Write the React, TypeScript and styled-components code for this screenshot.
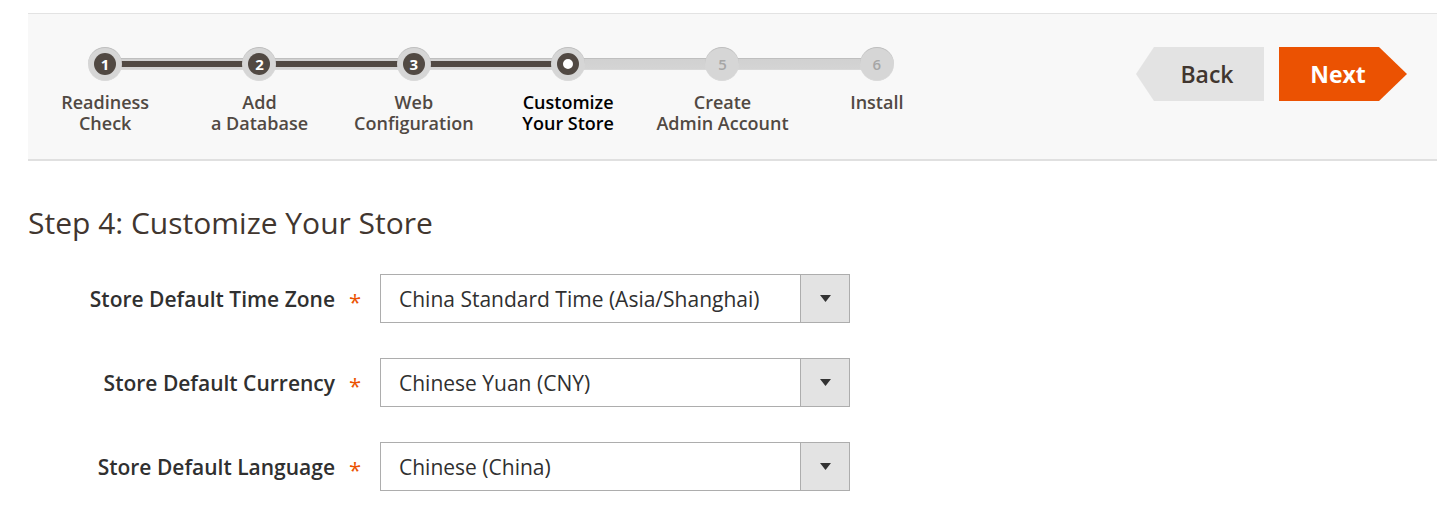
import React from "react";
import styled, { createGlobalStyle, css } from "styled-components";

const Global = createGlobalStyle`
  html, body { margin: 0; padding: 0; background: #ffffff; }
  body { font-family: "Open Sans", "Liberation Sans", sans-serif; color: #303030; }
  * { box-sizing: border-box; }
`;

const Page = styled.div`
  padding: 13px 6px 0 28px;
  width: 1443px;
`;

const Header = styled.div`
  display: flex;
  justify-content: space-between;
  align-items: flex-start;
  background: #f8f8f8;
  border-top: 1px solid #e3e3e3;
  border-bottom: 2px solid #e0e0e0;
  height: 148px;
`;

const Steps = styled.ol`
  position: relative;
  display: flex;
  margin: 0;
  padding: 33px 0 0 0;
  list-style: none;
`;

const Track = styled.div`
  position: absolute;
  top: 44px;
  left: 77px;
  right: 77px;
  height: 12px;
  background: linear-gradient(to bottom, #d1d1d1, #d4d4d4);
  border-top: 1px solid #bfbfbf;
  border-bottom: 1px solid #d9d9d9;
`;

const Progress = styled.div<{ $w: number }>`
  position: absolute;
  top: 47px;
  left: 77px;
  height: 6px;
  width: ${(p) => p.$w}px;
  background: #514943;
`;

const Step = styled.li`
  position: relative;
  width: 154.33px;
  display: flex;
  flex-direction: column;
  align-items: center;
`;

const Ring = styled.div`
  width: 34px;
  height: 34px;
  border-radius: 50%;
  background: #d6d6d6;
  border-top: 1px solid #bebebe;
  border-bottom: 1px solid #d9d9d9;
  display: flex;
  align-items: center;
  justify-content: center;
`;

const Dot = styled.div<{ $state: "done" | "active" | "todo" }>`
  width: 22px;
  height: 22px;
  border-radius: 50%;
  display: flex;
  align-items: center;
  justify-content: center;
  font-size: 15px;
  font-weight: 700;
  line-height: 1;
  ${(p) =>
    p.$state === "done" &&
    css`
      background: #514943;
      color: #ffffff;
    `}
  ${(p) =>
    p.$state === "active" &&
    css`
      background: #ffffff;
      border: 6px solid #514943;
    `}
  ${(p) =>
    p.$state === "todo" &&
    css`
      background: transparent;
      color: #a6a6a6;
      font-weight: 600;
    `}
`;

const StepLabel = styled.div<{ $active: boolean }>`
  margin-top: 11px;
  font-size: 18px;
  font-weight: 600;
  line-height: 21px;
  text-align: center;
  white-space: pre;
  color: ${(p) => (p.$active ? "#000000" : "#514943")};
`;

const Actions = styled.div`
  display: flex;
  gap: 15px;
  margin: 33px 30px 0 0;
`;

const NavButton = styled.button<{ $kind: "prev" | "next" }>`
  height: 54px;
  border: 0;
  font-family: "Open Sans", "Liberation Sans", sans-serif;
  font-size: 23px;
  cursor: pointer;
  display: flex;
  align-items: center;
  justify-content: center;
  ${(p) =>
    p.$kind === "prev"
      ? css`
          width: 128px;
          padding: 0 0 0 14px;
          background: #e3e3e3;
          color: #41362f;
          font-weight: 600;
          clip-path: polygon(18px 0, 100% 0, 100% 100%, 18px 100%, 0 50%);
        `
      : css`
          width: 128px;
          padding: 0 10px 0 0;
          background: #eb5202;
          color: #ffffff;
          font-weight: 700;
          clip-path: polygon(0 0, 100px 0, 100% 50%, 100px 100%, 0 100%);
        `}
`;

const Title = styled.h1`
  margin: 42px 0 0 0;
  font-size: 30px;
  font-weight: 400;
  line-height: 40px;
  color: #41362f;
`;

const Form = styled.div`
  display: flex;
  flex-direction: column;
  gap: 35px;
  margin-top: 31px;
`;

const Row = styled.div`
  display: grid;
  grid-template-columns: 307px 45px 470px;
  align-items: center;
`;

const Label = styled.label`
  text-align: right;
  font-size: 21px;
  font-weight: 600;
  color: #303030;
  white-space: nowrap;
`;

const Req = styled.span`
  padding-left: 14px;
  color: #eb5202;
  font-size: 22px;
  line-height: 1;
  padding-top: 4px;
`;

const Select = styled.div`
  display: flex;
  height: 49px;
  border: 1px solid #adadad;
  background: #ffffff;
`;

const SelectValue = styled.div`
  flex: 1;
  display: flex;
  align-items: center;
  padding-left: 18px;
  font-size: 21px;
  color: #303030;
  white-space: nowrap;
`;

const SelectArrow = styled.div`
  width: 49px;
  background: #e3e3e3;
  border-left: 1px solid #adadad;
  display: flex;
  align-items: center;
  justify-content: center;
`;

const steps = [
  "Readiness\nCheck",
  "Add\na Database",
  "Web\nConfiguration",
  "Customize\nYour Store",
  "Create\nAdmin Account",
  "Install",
];
const ACTIVE = 3;

const fields = [
  ["Store Default Time Zone", "China Standard Time (Asia/Shanghai)"],
  ["Store Default Currency", "Chinese Yuan (CNY)"],
  ["Store Default Language", "Chinese (China)"],
];

export default function App() {
  return (
    <>
      <Global />
      <Page>
        <Header>
          <Steps>
            <Track />
            <Progress $w={154.33 * ACTIVE} />
            {steps.map((s, i) => {
              const state = i < ACTIVE ? "done" : i === ACTIVE ? "active" : "todo";
              return (
                <Step key={i}>
                  <Ring>
                    <Dot $state={state}>{state === "active" ? "" : i + 1}</Dot>
                  </Ring>
                  <StepLabel $active={i === ACTIVE}>{s}</StepLabel>
                </Step>
              );
            })}
          </Steps>
          <Actions>
            <NavButton $kind="prev">Back</NavButton>
            <NavButton $kind="next">Next</NavButton>
          </Actions>
        </Header>
        <Title>Step 4: Customize Your Store</Title>
        <Form>
          {fields.map(([l, v]) => (
            <Row key={l}>
              <Label>{l}</Label>
              <Req>*</Req>
              <Select>
                <SelectValue>{v}</SelectValue>
                <SelectArrow>
                  <svg width="11" height="7" viewBox="0 0 11 7">
                    <path d="M0 0 H11 L5.5 7 Z" fill="#333333" />
                  </svg>
                </SelectArrow>
              </Select>
            </Row>
          ))}
        </Form>
      </Page>
    </>
  );
}
